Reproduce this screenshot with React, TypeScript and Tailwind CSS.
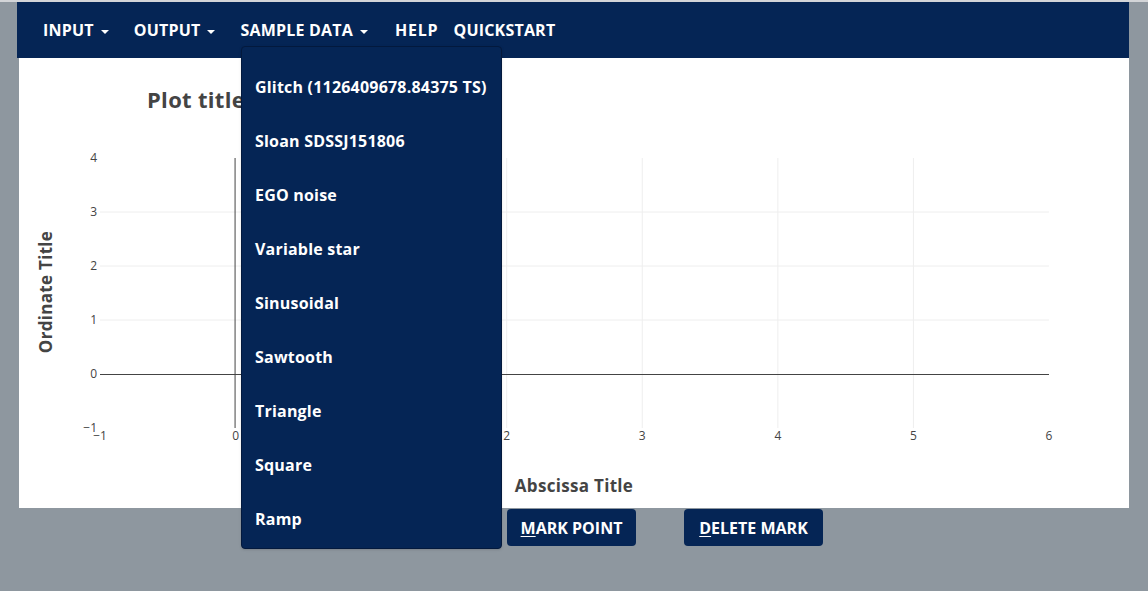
import React from "react"

const sampleData = [
  "Glitch (1126409678.84375 TS)",
  "Sloan SDSSJ151806",
  "EGO noise",
  "Variable star",
  "Sinusoidal",
  "Sawtooth",
  "Triangle",
  "Square",
  "Ramp",
]

function Caret() {
  return <span className="ml-[7px] inline-block border-x-[4px] border-t-[4px] border-x-transparent border-t-white align-middle" />
}

// chart coordinates are relative to the white panel
const xp = (v: number) => 81 + (v + 1) * 135.57
const yp = (v: number) => 316 - v * 54

function Chart() {
  const font = "'Open Sans', 'Liberation Sans', sans-serif"
  return (
    <svg width={1110} height={450} className="block" style={{ fontFamily: font }}>
      <text x={128} y={50} fontSize={22} fontWeight={700} fill="#444" letterSpacing={0.3}>Plot title</text>
      {[1, 2, 3].map((v) => (
        <line key={"h" + v} x1={xp(-1)} x2={xp(6)} y1={yp(v)} y2={yp(v)} stroke="#eee" />
      ))}
      {[1, 2, 3, 4, 5].map((v) => (
        <line key={"v" + v} x1={xp(v)} x2={xp(v)} y1={yp(4)} y2={yp(-1)} stroke="#eee" />
      ))}
      <line x1={xp(-1)} x2={xp(6)} y1={yp(0) + 0.5} y2={yp(0) + 0.5} stroke="#444" />
      <line x1={xp(0) - 0.5} x2={xp(0) - 0.5} y1={yp(4)} y2={yp(-1)} stroke="#444" />
      {[4, 3, 2, 1, 0, -1].map((v) => (
        <text key={"yl" + v} x={78} y={yp(v) + 4} fontSize={12} fill="#444" textAnchor="end">
          {v < 0 ? "\u2212" + -v : v}
        </text>
      ))}
      {[-1, 0, 1, 2, 3, 4, 5, 6].map((v) => (
        <text key={"xl" + v} x={xp(v)} y={382} fontSize={12} fill="#444" textAnchor="middle">
          {v < 0 ? "\u2212" + -v : v}
        </text>
      ))}
      <text x={555} y={434} fontSize={17} fontWeight={700} fill="#444" textAnchor="middle" letterSpacing={0.3}>Abscissa Title</text>
      <text x={0} y={0} fontSize={17} fontWeight={700} fill="#444" textAnchor="middle" letterSpacing={0.3} transform="translate(33 234) rotate(-90)">
        Ordinate Title
      </text>
    </svg>
  )
}

export default function App() {
  return (
    <div className="relative h-[591px] w-full overflow-hidden border-t-2 border-[#d3d5d8] bg-[#8e979f] font-['Open_Sans','Liberation_Sans',sans-serif]">
      <div className="ml-[17px] w-[1112px]">
        {/* Navbar */}
        <div className="flex h-[56px] items-center bg-[#052555] pl-[26px] text-[16px] font-bold tracking-[0.2px] text-white">
          <span className="mr-[25px]">INPUT<Caret /></span>
          <span className="mr-[25px]">OUTPUT<Caret /></span>
          <span className="mr-[27px]">SAMPLE DATA<Caret /></span>
          <span className="mr-[15px] tracking-[0.8px]">HELP</span>
          <span>QUICKSTART</span>
        </div>

        {/* Plot panel */}
        <div className="ml-[2px] h-[450px] w-[1110px] bg-white">
          <Chart />
        </div>

        {/* Buttons */}
        <div className="mt-px flex gap-[48px] pl-[490px]">
          <button className="h-[37px] w-[129px] rounded-[4px] bg-[#052555] text-[16px] font-bold text-white">
            <span className="underline underline-offset-2">M</span>ARK POINT
          </button>
          <button className="h-[37px] w-[139px] rounded-[4px] bg-[#052555] text-[16px] font-bold text-white">
            <span className="underline underline-offset-2">D</span>ELETE MARK
          </button>
        </div>
      </div>

      {/* Sample data dropdown */}
      <div className="absolute left-[241px] top-[44px] w-[261px] rounded-[4px] border border-[#03193d] bg-[#052555] pb-[2px] pt-[13px] shadow">
        {sampleData.map((s) => (
          <div key={s} className="flex h-[54px] items-center px-[13px] text-[16px] font-bold tracking-[0.2px] text-white">
            {s}
          </div>
        ))}
      </div>
    </div>
  )
}
